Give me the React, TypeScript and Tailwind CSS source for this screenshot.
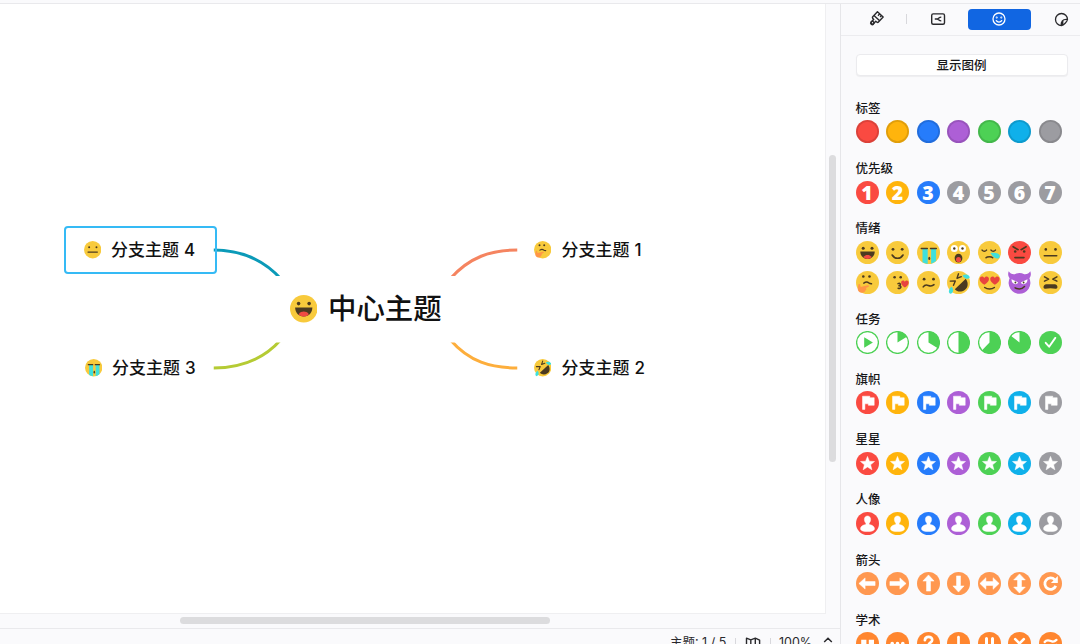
import type { ReactNode } from "react";

const RED = "#fa4a41";
const YELLOW = "#ffb40c";
const BLUE = "#267cfb";
const PURPLE = "#ad5fd6";
const GREEN = "#4dd155";
const CYAN = "#0fb0ea";
const GRAY = "#9c9ca1";
const PALETTE = [RED, YELLOW, BLUE, PURPLE, GREEN, CYAN, GRAY];
const FACE = "#f8ca3c";
const INK = "#4b3a20";
const TEAR = "#3fe0dc";

function Icon({ children, className = "size-[23px]" }: { children: ReactNode; className?: string }) {
  return (
    <svg viewBox="-11.5 -11.5 23 23" className={`block shrink-0 ${className}`}>
      {children}
    </svg>
  );
}

const disc = (fill: string) => <circle r="11.5" fill={fill} />;

function Eyes({ x1, x2, y, r = 1.4 }: { x1: number; x2: number; y: number; r?: number }) {
  return (
    <>
      <circle cx={x1} cy={y} r={r} fill={INK} />
      <circle cx={x2} cy={y} r={r} fill={INK} />
    </>
  );
}

function Stroke({ d, color = INK, w = 1.6 }: { d: string; color?: string; w?: number }) {
  return <path d={d} fill="none" stroke={color} strokeWidth={w} strokeLinecap="round" strokeLinejoin="round" />;
}

function Heart({ x, y, s }: { x: number; y: number; s: number }) {
  return (
    <path
      transform={`translate(${x} ${y}) scale(${s})`}
      d="M0 4.2C-2.6 2.5-4.5 .8-4.5-1.4c0-1.5 1-2.5 2.2-2.5C-1.2-3.9-.4-3.3 0-2.4c.4-.9 1.2-1.5 2.3-1.5 1.2 0 2.2 1 2.2 2.5C4.5.8 2.6 2.5 0 4.2z"
      fill="#e8433f"
    />
  );
}

const FACES: Record<string, ReactNode> = {
  grin: (
    <>
      {disc(FACE)}
      <Eyes x1={-4.3} x2={4.5} y={-4.3} r={1.5} />
      <path d="M-7.2-1H7.2C7.2 3.3 4.3 6.5 0 6.5S-7.2 3.3-7.2-1z" fill={INK} />
      <path d="M-4.3 4.6C-3 2.9-1.6 2.4 0 2.4S3 2.9 4.3 4.6C3.1 5.9 1.7 6.5 0 6.5S-3.1 5.9-4.3 4.6z" fill="#f04a43" />
    </>
  ),
  smile: (
    <>
      {disc(FACE)}
      <Eyes x1={-4.5} x2={4.7} y={-3.2} />
      <Stroke d="M-5.3 2.5C-3 6.8 3.2 6.8 5.5 2.5" />
    </>
  ),
  sob: (
    <>
      {disc(FACE)}
      <path d="M-6-3.5H-.8V11.4A11.5 11.5 0 0 1-6 9.8zM2.6-3.5H7.6V8.6A11.5 11.5 0 0 1 2.6 11.2z" fill={TEAR} />
      <Stroke d="M-7.2-4H-1.2M2-4H7.8" w={1.5} />
      <ellipse cx=".8" cy="5.9" rx="1" ry="1.7" fill={INK} />
    </>
  ),
  shock: (
    <>
      {disc(FACE)}
      <circle cx="-4.2" cy="-4" r="3.5" fill="#fff" />
      <circle cx="4" cy="-4" r="3.5" fill="#fff" />
      <Eyes x1={-4.2} x2={4} y={-4} r={1.2} />
      <ellipse cy="5.6" rx="3.9" ry="4.4" fill={INK} />
      <ellipse cy="7" rx="2.5" ry="2.6" fill="#f04a43" />
    </>
  ),
  sleepy: (
    <>
      {disc(FACE)}
      <path d="M1 .6C4.5-.6 10.6.6 10.3 3.8 9.9 7.5 4.4 7 1 .6z" fill={TEAR} />
      <Stroke d="M-7.4-2.4C-6.2-.9-4.2-.9-3-2.4M1.5-2.4C2.7-.9 4.7-.9 5.9-2.4M-3.5 5.2C-2.3 3.9 2 3.9 3.2 5.2" w={1.5} />
    </>
  ),
  angry: (
    <>
      {disc(RED)}
      <Stroke d="M-6.4-5.8L-1.4-2.8M6.6-5.8L1.6-2.8M-4.6 5.1H4.5" w={1.6} />
      <Eyes x1={-4.3} x2={4.7} y={-1} r={1.3} />
    </>
  ),
  neutral: (
    <>
      {disc(FACE)}
      <Eyes x1={-4.7} x2={5} y={-3.1} r={1.3} />
      <Stroke d="M-6.2 3.2H6.2" w={1.6} />
    </>
  ),
  think: (
    <>
      {disc(FACE)}
      <Eyes x1={-4.2} x2={2} y={-6} r={1.3} />
      <Stroke d="M-3.7.6C-1.5-1-.3-.9 1.3.3 2.4 1 3 1.1 4 1.3" w={1.5} />
      <path
        d="M-9 1.8c1-.7 1.7.1 1.8 1.1l.4 1.6L.2 2.7c1.6-.3 1.7 1.2.5 1.7L-1.8 5.6c1.5.8.6 2-.2 2.2-.2 1.5-1.5 2.4-3.3 2.5C-8 10.5-9.9 8.5-9.8 6z"
        fill="#ff9647"
      />
    </>
  ),
  kiss: (
    <>
      {disc(FACE)}
      <Eyes x1={-2.9} x2={3.2} y={-5.2} r={1.3} />
      <Stroke d="M.5 1.1C2.7.2 4.2 2.4 1.5 3.2 4.6 3.2 3.7 6.7.6 5.7" w={1.5} />
      <Heart x={7.4} y={1.4} s={0.84} />
    </>
  ),
  confused: (
    <>
      {disc(FACE)}
      <Eyes x1={-4.4} x2={5} y={-3.3} />
      <Stroke d="M-5.3 4.4C-4 2.5-2.4 2.1-.3 2.9 2 3.8 4 3.6 5.5 2.2" w={1.6} />
    </>
  ),
  rofl: (
    <>
      {disc(FACE)}
      <path d="M-3.7 6.8L7.3-3.7C10.4.8 9.4 5.3 6.2 7.5 2.9 9.8-1.2 9.6-3.7 6.8z" fill={INK} />
      <Stroke d="M-8.3-1.4L-3.2-1.5-5 2.8M0-8.7L-1.5-4.2 2.8-5.8" w={1.4} />
      <path d="M4-6.8C6.5-9 11-7.9 11.2-4.8 9.7-2.7 6-3.7 4-6.8z" fill={TEAR} />
      <path d="M-6.9 4.2C-4.5 6.5-5 10.7-8.2 11.2-10.6 10.3-9.9 6.3-6.9 4.2z" fill={TEAR} />
    </>
  ),
  love: (
    <>
      {disc(FACE)}
      <Heart x={-5.2} y={-2} s={1.04} />
      <Heart x={5.4} y={-2} s={1.04} />
      <Stroke d="M-4.8 5C-2.2 7.1 2.3 7.1 4.9 5" w={1.5} />
    </>
  ),
  devil: (
    <>
      <path
        d="M-10.8-11.3C-9.4-9-7.4-8-4.7-8.3A11 11 0 0 1 4.7-8.3C7.4-8 9.4-9 10.8-11.3 11.8-8.6 11.4-6.2 9.9-4.2A10.9 10.9 0 1 1-9.9-4.2C-11.4-6.2-11.8-8.6-10.8-11.3z"
        fill={PURPLE}
      />
      <path d="M-8-3.3L-1.3-.1C-2.3 2.7-8.3 2.4-8-3.3zM8-3.3L1.3-.1C2.3 2.7 8.3 2.4 8-3.3z" fill="#fff" />
      <circle cx="-4.1" cy="0" r=".9" fill={INK} />
      <circle cx="4.1" cy="0" r=".9" fill={INK} />
      <Stroke d="M-4.4 5.3C-1 7 2.8 6.5 5 4" w={1.5} />
    </>
  ),
  tired: (
    <>
      {disc(FACE)}
      <Stroke d="M-6-5.7L-1.9-3.4-6-1.3M6.4-5.7L2.3-3.4 6.4-1.3" w={1.5} />
      <path d="M-4.3 1.7H4.3C7.4 1.7 8 6.7 5.1 6.2 2 5.5-2 5.5-5.1 6.2-8 6.7-7.4 1.7-4.3 1.7z" fill={INK} />
    </>
  ),
};

function Face({ name, className }: { name: string; className?: string }) {
  return <Icon className={className}>{FACES[name]}</Icon>;
}

function Pie({ degrees }: { degrees: number }) {
  const a = (degrees * Math.PI) / 180;
  const x = 11 * Math.sin(a);
  const y = -11 * Math.cos(a);
  return (
    <Icon>
      <circle r="10.9" fill="#fff" stroke={GREEN} strokeWidth="1.3" />
      <path d={`M0 0V-11A11 11 0 ${degrees > 180 ? 1 : 0} 1 ${x} ${y}z`} fill={GREEN} />
    </Icon>
  );
}

const ARROW_LEFT = "M-8.6 0L-2.4-5.6V-2H7.6V2H-2.4V5.6z";
const ARROW_BOTH = "M-9.6 0L-3.6-5.8V-2H3.6V-5.8L9.6 0 3.6 5.8V2H-3.6V5.8z";

function Glyph({ color, d, rotate = 0 }: { color: string; d: string; rotate?: number }) {
  return (
    <Icon>
      {disc(color)}
      <path d={d} fill="#fff" stroke="#fff" strokeWidth=".5" strokeLinejoin="round" transform={`rotate(${rotate})`} />
    </Icon>
  );
}

const FLAG = "M-5-6.3H2.3V-4.8H6.7V2.8H.8V1.3H-2.6V6.9H-5z";
const STAR = "M0-7.1L1.9-2.3 7-2 3.1 1.3 4.4 6.3 0 3.5-4.4 6.3-3.1 1.3-7-2-1.9-2.3z";
const PERSON =
  "M0-7.5C2-7.5 3.1-6 3.1-4 3.1-2.4 2.5-1.2 1.6-.4V1.1C5 1.5 7 3.2 7 5.2 7 7.2 3.8 8 0 8S-7 7.2-7 5.2C-7 3.2-5 1.5-1.6 1.1V-.4C-2.5-1.2-3.1-2.400-3.100-4-3.100-6-2-7.500 0-7.500z";
const ARROW = "#ff9850";
const STUDY = "#ff862f";

function Section({ title, children }: { title: string; children: ReactNode }) {
  return (
    <section>
      <h3 className="h-[18px] text-[12.5px] leading-[19px] font-medium text-[#161618]">{title}</h3>
      <div className="mt-[3.2px] grid grid-cols-[repeat(7,23px)] gap-[7.5px]">{children}</div>
    </section>
  );
}

function Toolbar() {
  return (
    <header className="flex h-[31.500px] shrink-0 items-center border-b border-[#ececef]">
      <div className="flex w-[69px] justify-center">
        <svg viewBox="-8 -8 16 16" className="size-4" fill="none" stroke="#29292c" strokeWidth="1.4" strokeLinejoin="round">
          <g transform="rotate(43)">
            <path d="M-3.900-6.300H3.900V.6C3.900 1.500 3 1.900 1.400 1.900V5.500A1.500 1.500 0 0 1-1.400 5.500V1.900C-3 1.900-3.900 1.500-3.900.6zM-3.900-1.200H3.900M-.8-6.300V-3.800M1.600-6.300V-4.300" />
            <circle cy="5.400" r="1.600" />
          </g>
        </svg>
      </div>
      <div className="mx-[-4px] h-[10px] w-px bg-[#d8d8dc]" />
      <div className="flex w-[70px] justify-center">
        <svg viewBox="0 0 16 16" className="size-4" fill="none" stroke="#29292c" strokeWidth="1.4">
          <rect x="1.7" y="2.9" width="12.8" height="10.3" rx="1.5" />
          <path d="M4.8 8H7.2C8.4 8 9 6.1 11.3 6.1M7.2 8C8.4 8 9 9.9 11.3 9.9" />
        </svg>
      </div>
      <button className="ml-[-5px] flex h-[21.5px] w-[62.5px] shrink-0 items-center justify-center rounded-[4px] bg-[#1166e2]">
        <svg viewBox="-7 -7 14 14" className="size-[14px]" fill="none" stroke="#fff" strokeWidth="1.3" strokeLinecap="round">
          <circle r="6" />
          <path d="M-2.7 1.6C-1.5 3.5 1.5 3.5 2.7 1.6" />
          <circle cx="-2.3" cy="-1.4" r=".35" />
          <circle cx="2.3" cy="-1.4" r=".35" />
        </svg>
      </button>
      <div className="ml-[23.500px] flex">
        <svg viewBox="-7.5 -7.5 15 15" className="size-[15px]" fill="none" stroke="#29292c" strokeWidth="1.3" strokeLinejoin="round">
          <path d="M6 0A6 6 0 1 0 0 6C2.2 5.7 5.6 2.3 6 0zM0 6C-.7 2.2.9-.5 6 0M0 6C1.8 4.3 1.4 2.4 1.3 1.7" />
        </svg>
      </div>
    </header>
  );
}

function Panel() {
  return (
    <aside className="flex w-[240px] flex-col overflow-hidden border-l border-[#e6e6e9] bg-[#fafafc]">
      <Toolbar />
      <div className="flex flex-col pl-[14.500px]">
        <button className="mt-[18.500px] h-[22px] w-[212px] rounded-[4px] border border-[#ebebee] bg-white text-[12.5px] leading-[21px] font-medium text-[#161618] shadow-[0_1px_1px_#0000000d]">
          显示图例
        </button>
        <div className="mt-[23.200px] flex flex-col gap-[15.95px]">
          <Section title="标签">
            {PALETTE.map((c) => (
              <Icon key={c}>
                {disc(c)}
                <circle r="10.6" fill="none" stroke="#000" strokeOpacity=".12" strokeWidth="1.8" />
              </Icon>
            ))}
          </Section>
          <Section title="优先级">
            {[RED, YELLOW, BLUE, GRAY, GRAY, GRAY, GRAY].map((c, i) => (
              <span
                key={i}
                className="flex size-[23px] items-center justify-center rounded-full font-['Open_Sans','Noto_Sans',sans-serif] text-[19.500px] leading-[23px] font-extrabold text-white"
                style={{ backgroundColor: c }}
              >
                {i + 1}
              </span>
            ))}
          </Section>
          <Section title="情绪">
            {Object.keys(FACES).map((n) => (
              <Face key={n} name={n} />
            ))}
          </Section>
          <Section title="任务">
            <Icon>
              <circle r="10.9" fill="#fff" stroke={GREEN} strokeWidth="1.3" />
              <path d="M-3.3-5.3L5.4 0-3.3 5.3z" fill={GREEN} />
            </Icon>
            {[58, 122, 180, 224, 308].map((d) => (
              <Pie key={d} degrees={d} />
            ))}
            <Icon>
              {disc(GREEN)}
              <Stroke d="M-4.8.3L-1.4 4.2 4.8-4.6" color="#fff" w={1.9} />
            </Icon>
          </Section>
          <Section title="旗帜">
            {PALETTE.map((c) => (
              <Glyph key={c} color={c} d={FLAG} />
            ))}
          </Section>
          <Section title="星星">
            {PALETTE.map((c) => (
              <Glyph key={c} color={c} d={STAR} />
            ))}
          </Section>
          <Section title="人像">
            {PALETTE.map((c) => (
              <Glyph key={c} color={c} d={PERSON} />
            ))}
          </Section>
          <Section title="箭头">
            <Glyph color={ARROW} d={ARROW_LEFT} />
            <Glyph color={ARROW} d={ARROW_LEFT} rotate={180} />
            <Glyph color={ARROW} d={ARROW_LEFT} rotate={90} />
            <Glyph color={ARROW} d={ARROW_LEFT} rotate={270} />
            <Glyph color={ARROW} d={ARROW_BOTH} />
            <Glyph color={ARROW} d={ARROW_BOTH} rotate={90} />
            <Icon>
              {disc(ARROW)}
              <path d="M4.2-3.8A5.7 5.7 0 1 0 5.3 2.4" fill="none" stroke="#fff" strokeWidth="2.8" />
              <path d="M7.3-7.4V-.6H.4z" fill="#fff" />
            </Icon>
          </Section>
          <Section title="学术">
            <Icon>
              {disc(STUDY)}
              <path
                d="M-6.3-3.8H-1.1V1.2C-1.1 3.3-2.5 4.6-4.8 5V2.5C-3.9 2.2-3.5 1.7-3.5 1.2H-6.3zM1.3-3.8H6.5V1.2C6.5 3.3 5.1 4.6 2.8 5V2.5C3.7 2.2 4.1 1.7 4.1 1.2H1.3z"
                fill="#fff"
              />
            </Icon>
            <Icon>
              {disc(STUDY)}
              <circle cx="-5.3" r="1.8" fill="#fff" />
              <circle r="1.8" fill="#fff" />
              <circle cx="5.3" r="1.8" fill="#fff" />
            </Icon>
            <Icon>
              {disc(STUDY)}
              <Stroke d="M-3.6-3.3C-3.3-7.7 3.7-7.6 3.7-3.6 3.7-.8 0-.9 0 2" color="#fff" w={2.7} />
              <circle cy="6.3" r="1.8" fill="#fff" />
            </Icon>
            <Icon>
              {disc(STUDY)}
              <Stroke d="M0-6.3V2" color="#fff" w={2.7} />
              <circle cy="6" r="1.8" fill="#fff" />
            </Icon>
            <Icon>
              {disc(STUDY)}
              <Stroke d="M-3-5V5M3-5V5" color="#fff" w={3} />
            </Icon>
            <Icon>
              {disc(STUDY)}
              <Stroke d="M-4.3-4.3L4.3 4.3M4.3-4.3L-4.3 4.3" color="#fff" w={2.6} />
            </Icon>
            <Icon>
              {disc(STUDY)}
              <Stroke d="M-5.8-1.5C-3.2-5 0-2.3 2-2 3.6-1.8 4.8-2.5 5.9-3.6M-5.8 3.5C-3.2 0 0 2.7 2 3 3.6 3.2 4.8 2.5 5.9 1.4" color="#fff" w={2.3} />
            </Icon>
          </Section>
        </div>
      </div>
    </aside>
  );
}

const TOPICS = [
  { face: "neutral", label: "分支主题 4", box: "left-[84px] top-[238px]", gap: "gap-[9.5px]" },
  { face: "sob", label: "分支主题 3", box: "left-[85px] top-[356px]", gap: "gap-[9.5px]" },
  { face: "think", label: "分支主题 1", box: "left-[534px] top-[238px]", gap: "gap-[10px]" },
  { face: "rofl", label: "分支主题 2", box: "left-[534px] top-[356px]", gap: "gap-[10px]" },
];

function MindMap() {
  return (
    <div className="absolute inset-0 text-[#111]">
      <svg viewBox="0 0 825 609" className="absolute top-0 left-0 h-[609px] w-[825px]" fill="none" strokeWidth="3">
        <clipPath id="links">
          <path d="M213.5 200H517.5V272H213.5zM213.5 338.5H517.5V400H213.5z" />
        </clipPath>
        <g clipPath="url(#links)">
          <path d="M213.5 246C240 246 262.5 254.5 281 275" stroke="#0b9ab8" />
          <path d="M213.5 364C242 364 263.5 355.5 281 335.5" stroke="#b5cb34" />
          <path d="M517.5 246C491 246 469.5 253 450 275" stroke="#f58460" />
          <path d="M517.5 364C491 364 469.5 358 450 335.5" stroke="#fdae3c" />
        </g>
      </svg>
      <div className="absolute top-[222px] left-[64px] h-[48px] w-[153px] rounded-[4px] border-2 border-[#35baf5]" />
      {TOPICS.map((t) => (
        <div key={t.face} className={`absolute flex h-4 items-center whitespace-nowrap ${t.box} ${t.gap}`}>
          <Face name={t.face} className="size-[17.4px]" />
          <span className="text-[17px] leading-4 font-medium [word-spacing:0.6px]">{t.label}</span>
        </div>
      ))}
      <div className="absolute top-[290px] left-[289.5px] flex h-[30px] items-center gap-[11px] whitespace-nowrap">
        <Face name="grin" className="size-[27.5px]" />
        <span className="text-[28.4px] leading-[30px] font-medium">中心主题</span>
      </div>
    </div>
  );
}

function StatusBar() {
  return (
    <footer className="flex h-[30px] shrink-0 items-center justify-end border-t border-[#e9e9ec] text-[12.5px] text-[#29292c]">
      <span className="w-[57px] whitespace-nowrap">主题: 1 / 5</span>
      <span className="ml-2 h-3 w-px bg-[#d8d8dc]" />
      <svg viewBox="0 0 16 14" className="ml-[9px] h-[14px] w-4" fill="none" stroke="#29292c" strokeWidth="1.4" strokeLinejoin="round">
        <path d="M1.5 1.200L5.800 2.800 10.300 1.200 14.600 3.200V12.500L10.300 10.500 5.800 12.800 1.500 11zM5.800 2.800V12.800M10.300 1.200V10.500" />
      </svg>
      <span className="ml-[9px] h-3 w-px bg-[#d8d8dc]" />
      <span className="ml-2 w-[34px]">100%</span>
      <svg viewBox="0 0 10 14" className="mr-[7px] ml-[10px] h-[14px] w-[10px]" fill="none" stroke="#29292c" strokeWidth="1.5">
        <path d="M1.2 5L5 1.3 8.8 5M1.2 9.5L5 13 8.8 9.5" />
      </svg>
    </footer>
  );
}

export default function App() {
  return (
    <div className="flex h-[644px] w-[1080px] flex-col overflow-hidden bg-[#fafafc] font-['Inter','Noto_Sans_CJK_SC',sans-serif]">
      <div className="h-1 shrink-0 border-b border-[#e9e9ec]" />
      <div className="flex min-h-0 flex-1">
        <div className="flex w-[840px] flex-col overflow-hidden">
          <div className="flex h-[610px] shrink-0">
            <main className="relative w-[826px] border-r border-b border-[#efeff1] bg-white">
              <MindMap />
            </main>
            <div className="flex-1 pt-[151px] pl-[3px]">
              <div className="h-[307px] w-[7px] rounded-full bg-[#dcdcde]" />
            </div>
          </div>
          <div className="h-[14px] shrink-0 pt-[3px] pl-[180px]">
            <div className="h-[7px] w-[370px] rounded-full bg-[#dcdcde]" />
          </div>
          <StatusBar />
        </div>
        <Panel />
      </div>
    </div>
  );
}
